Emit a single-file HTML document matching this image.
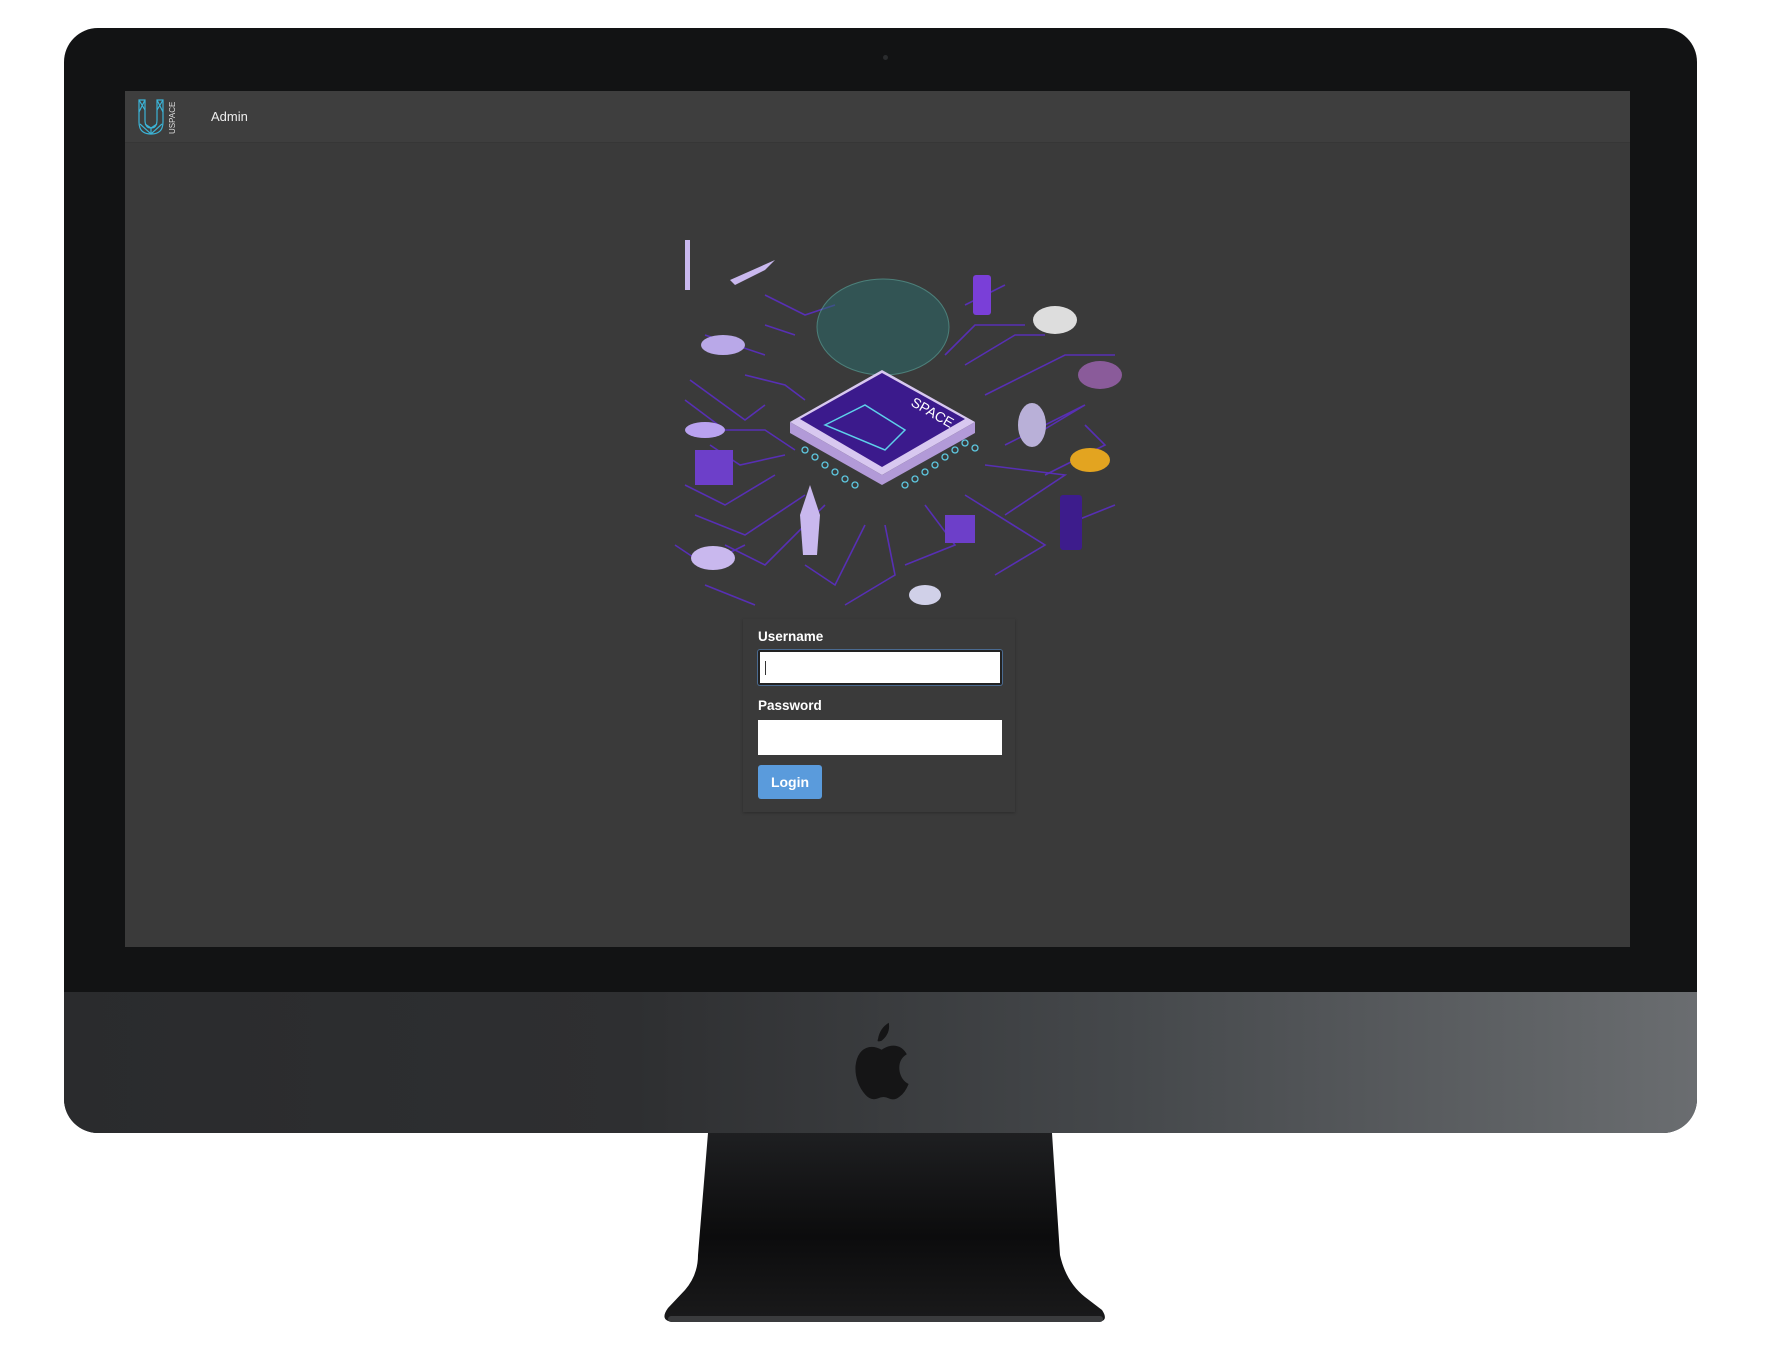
<!DOCTYPE html>
<html><head><meta charset="utf-8"><style>
*{margin:0;padding:0;box-sizing:border-box}
body{width:1770px;height:1360px;background:#fff;position:relative;overflow:hidden;font-family:"Liberation Sans",sans-serif}
.bezel{position:absolute;left:64px;top:28px;width:1633px;height:1105px;background:#121314;border-radius:34px;overflow:hidden}
.chin{position:absolute;left:0;top:964px;width:100%;height:141px;background:linear-gradient(90deg,#2a2b2d 0%,#2e2f31 35%,#45484b 65%,#6a6d70 100%)}
.cam{position:absolute;left:819px;top:27px;width:5px;height:5px;border-radius:50%;background:#2a2c2e}
.screen{position:absolute;left:125px;top:91px;width:1505px;height:856px;background:#3a3a3a}
.hdr{position:absolute;left:0;top:0;width:100%;height:52px;background:#3e3e3e;border-bottom:1px solid #363636}
.admin{position:absolute;left:86px;top:18px;color:#eee;font-size:13px}
.panel{position:absolute;left:618px;top:528px;width:272px;height:193px;background:#3a3a3a;box-shadow:0 1px 3px rgba(0,0,0,.25)}
.lbl{position:absolute;left:15px;color:#fff;font-weight:bold;font-size:13.5px}
.inp{position:absolute;left:15px;width:244px;height:35px;background:#fff}
.btn{position:absolute;left:15px;top:146px;width:64px;height:34px;background:#5a9bdc;border-radius:3px;color:#fff;font-weight:bold;font-size:14px;text-align:center;line-height:34px}
</style></head><body>
<svg style="position:absolute;left:0;top:0" width="1770" height="1360">
<defs><linearGradient id="st" x1="0" x2="0" y1="0" y2="1"><stop offset="0" stop-color="#1e1f21"/><stop offset="0.55" stop-color="#0c0c0d"/><stop offset="1" stop-color="#1a1a1b"/></linearGradient></defs>
<path d="M708 1133 L1052 1133 L1060 1255 Q1066 1282 1085 1297 L1102 1310 Q1110 1322 1096 1322 L676 1322 Q658 1322 668 1308 L685 1290 Q698 1275 698 1255 Z" fill="url(#st)"/>
<rect x="668" y="1316" width="435" height="6" rx="3" fill="#3a3b3d"/>
</svg>
<div class="bezel"><div class="cam"></div><div class="chin"></div>
<svg style="position:absolute;left:787px;top:993px" width="63" height="81" viewBox="0 0 70 90">
<path d="M42 2 Q44 14 34 22 Q28 24 30 20 Q32 8 42 2Z" fill="#151516"/>
<path d="M34 32 Q46 24 56 30 Q60 33 62 37 Q52 43 54 56 Q56 66 64 70 Q60 80 54 84 Q48 89 42 86 Q36 83 30 86 Q22 89 16 82 Q4 68 5 50 Q7 32 20 29 Q27 28 34 32Z" fill="#151516"/>
</svg>
</div>
<div class="screen">
<div class="hdr">
<svg style="position:absolute;left:12px;top:7px" width="40" height="38" viewBox="0 0 40 38">
<g fill="none" stroke="#3bb3d6" stroke-width="1.2">
<path d="M2 2 L2 24 Q2 36 14 36 Q26 36 26 24 L26 2 L20 2 L20 22 Q20 30 14 30 Q8 30 8 22 L8 2 Z"/>
<path d="M2 2 L8 12 M8 2 L2 14 M20 2 L26 14 M26 2 L20 12 M3 26 L14 36 L25 26 M8 26 L14 30 L20 26 M14 30 L14 36"/>
</g>
<text x="38" y="36" transform="rotate(-90 38 36)" fill="#ddd" font-size="8" font-family="Liberation Sans">USPACE</text>
</svg>
<div class="admin">Admin</div>
</div>
<svg style="position:absolute;left:520px;top:144px" width="500" height="400" viewBox="640 230 500 400">
<g fill="none" stroke="#5b2ec2" stroke-width="1.6" opacity="0.9">
<path d="M680 395 L720 425 L760 425 L790 445"/>
<path d="M685 375 L740 415 L760 400"/>
<path d="M740 370 L780 380 L800 395"/>
<path d="M705 440 L735 460 L780 450"/>
<path d="M680 480 L720 500 L770 470"/>
<path d="M690 510 L740 530 L800 490"/>
<path d="M720 540 L760 560 L820 500"/>
<path d="M800 560 L830 580 L860 520"/>
<path d="M840 600 L890 570 L880 520"/>
<path d="M900 560 L950 540 L920 500"/>
<path d="M990 570 L1040 540 L960 490"/>
<path d="M1000 510 L1060 470 L980 460"/>
<path d="M1030 430 L1080 400 L1000 440"/>
<path d="M960 360 L1010 330 L1040 330"/>
<path d="M940 350 L970 320 L1020 320"/>
<path d="M980 390 L1060 350 L1110 350"/>
<path d="M1040 470 L1100 440 L1080 420"/>
<path d="M700 330 L760 350"/>
<path d="M760 320 L790 330"/>
<path d="M1060 520 L1110 500"/>
<path d="M700 580 L750 600"/>
<path d="M760 290 L800 310 L830 300"/>
<path d="M960 300 L1000 280"/>
<path d="M670 540 L700 560 L740 540"/>
</g>
<g fill="none" stroke="#5ec8e0" stroke-width="1.3">
<circle cx="800" cy="445" r="3"/><circle cx="810" cy="452" r="3"/><circle cx="820" cy="460" r="3"/><circle cx="830" cy="467" r="3"/><circle cx="840" cy="474" r="3"/><circle cx="850" cy="480" r="3"/>
<circle cx="900" cy="480" r="3"/><circle cx="910" cy="474" r="3"/><circle cx="920" cy="467" r="3"/><circle cx="930" cy="460" r="3"/><circle cx="940" cy="452" r="3"/><circle cx="950" cy="445" r="3"/><circle cx="960" cy="438" r="3"/><circle cx="970" cy="443" r="3"/>
</g>
<ellipse cx="878" cy="322" rx="66" ry="48" fill="#2d6a6a" opacity="0.55" stroke="#5bbab0"/>
<path d="M785 417 L877 365 L970 417 L877 470 Z" fill="#d8c8f0"/>
<path d="M785 417 L785 428 L877 480 L970 428 L970 417 L877 470 Z" fill="#b29ad8"/>
<path d="M795 414 L877 368 L960 414 L877 462 Z" fill="#3b1a8c"/>
<path d="M820 420 L860 400 L900 425 L880 445 Z" fill="none" stroke="#5ed0ea" stroke-width="1.5"/>
<text x="905" y="400" fill="#fff" font-size="14" font-family="Liberation Sans" transform="rotate(30 905 400)">SPACE</text>
<g fill="#c9b8ee">
<rect x="680" y="235" width="5" height="50"/>
<path d="M725 275 L770 255 L760 265 L730 280Z"/>
<rect x="968" y="270" width="18" height="40" rx="3" fill="#7a3fd8"/>
<ellipse cx="1050" cy="315" rx="22" ry="14" fill="#ddd"/>
<ellipse cx="718" cy="340" rx="22" ry="10" fill="#b9a8e8"/>
<ellipse cx="700" cy="425" rx="20" ry="8" fill="#b9a2f0"/>
<rect x="690" y="445" width="38" height="35" fill="#6d3fc9"/>
<ellipse cx="1027" cy="420" rx="14" ry="22" fill="#b9b0d8"/>
<ellipse cx="1095" cy="370" rx="22" ry="14" fill="#8a5b9a"/>
<ellipse cx="1085" cy="455" rx="20" ry="12" fill="#e3a420"/>
<rect x="1055" y="490" width="22" height="55" rx="3" fill="#3d1c8c"/>
<path d="M795 510 L805 480 L815 510 L812 550 L798 550Z"/>
<rect x="940" y="510" width="30" height="28" fill="#6d3fc9"/>
<ellipse cx="708" cy="553" rx="22" ry="12"/>
<ellipse cx="920" cy="590" rx="16" ry="10" fill="#d0d0e8"/>
</g>
</svg>
<div class="panel">
<div class="lbl" style="top:10px">Username</div>
<div class="inp" style="top:31px;border:2px solid #222;box-shadow:0 0 0 1px #4a6a90;border-radius:2px"><div style="position:absolute;left:5px;top:9px;width:1px;height:14px;background:#333"></div></div>
<div class="lbl" style="top:79px">Password</div>
<div class="inp" style="top:101px"></div>
<div class="btn">Login</div>
</div>
</div>
</body></html>
